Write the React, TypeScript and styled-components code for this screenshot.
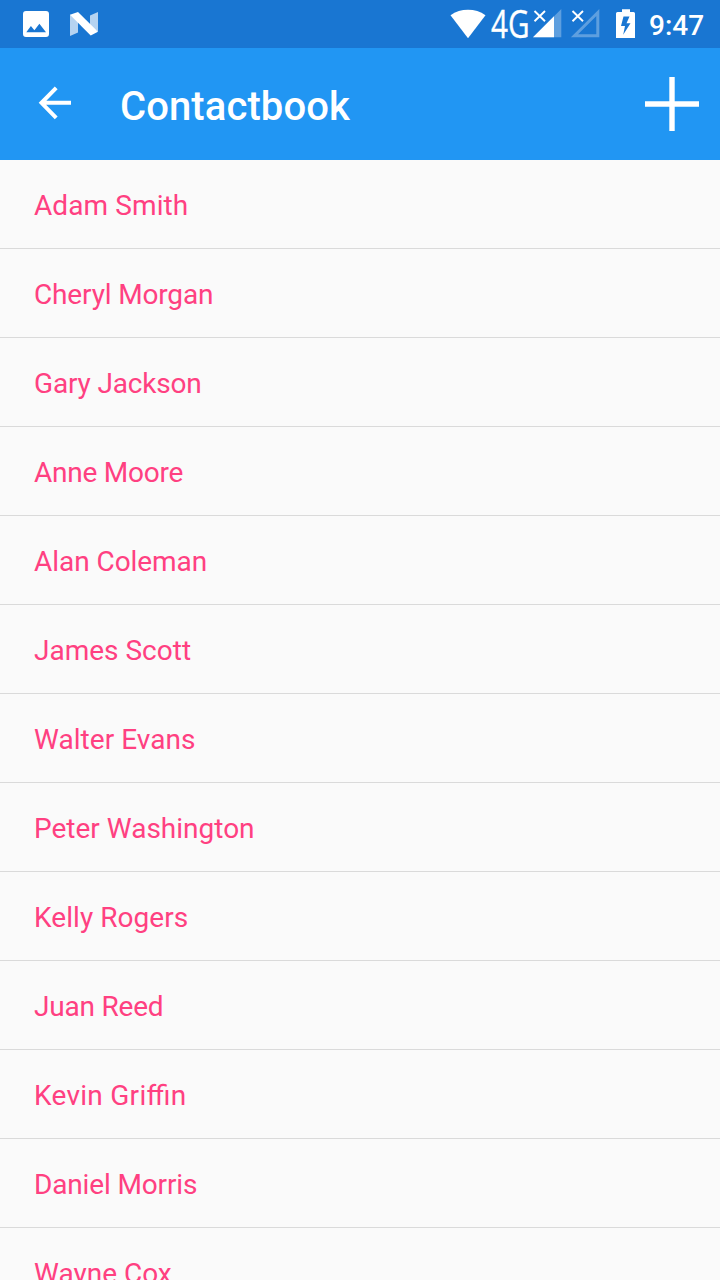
import React from "react";
import styled, { createGlobalStyle } from "styled-components";

const GlobalStyle = createGlobalStyle`
  * { box-sizing: border-box; }
  body {
    margin: 0;
    background: #fafafa;
    font-family: Roboto, "Liberation Sans", sans-serif;
  }
`;

const Screen = styled.div`
  display: flex;
  flex-direction: column;
  width: 720px;
  height: 1280px;
  overflow: hidden;
  background: #fafafa;
`;

const StatusBar = styled.header`
  display: flex;
  flex: none;
  justify-content: space-between;
  height: 48px;
  padding: 0 16px 0 22px;
  background: #1976d2;
`;

const StatusGroup = styled.div`
  display: flex;
  align-items: center;
`;

const StatusIcon = styled.svg<{ $gap?: number }>`
  display: block;
  flex: none;
  margin-right: ${({ $gap = 0 }) => $gap}px;
  overflow: visible;
`;

const Clock = styled.time`
  width: 55px;
  color: #fff;
  font-size: 28px;
  font-weight: 500;
  line-height: 46px;
  padding-top: 4px;
  white-space: nowrap;
`;

const Toolbar = styled.nav`
  display: flex;
  flex: none;
  align-items: center;
  height: 112px;
  padding: 0 20px 0 38px;
  background: #2196f3;
`;

const IconButton = styled.button`
  display: flex;
  flex: none;
  padding: 0;
  border: 0;
  background: none;
`;

const Title = styled.h1`
  flex: 1;
  margin: 0 0 0 48px;
  padding-top: 6px;
  color: #fff;
  font-size: 40px;
  font-weight: 500;
  letter-spacing: 0.1px;
  line-height: 48px;
`;

const ContactList = styled.ul`
  flex: 1;
  min-height: 0;
  margin: 0;
  padding: 0;
  overflow: hidden;
  list-style: none;
`;

const ContactRow = styled.li<{ $tracking: number }>`
  height: 89px;
  padding: 2px 34px 0;
  border-bottom: 1px solid #dadada;
  color: #ff4081;
  font-size: 28px;
  font-feature-settings: "liga" 1;
  letter-spacing: ${({ $tracking }) => $tracking}px;
  line-height: 88px;
`;

const contacts = [
  { name: "Adam Smith", tracking: 0.1 },
  { name: "Cheryl Morgan", tracking: -0.15 },
  { name: "Gary Jackson", tracking: -0.17 },
  { name: "Anne Moore", tracking: -0.23 },
  { name: "Alan Coleman", tracking: -0.05 },
  { name: "James Scott", tracking: 0 },
  { name: "Walter Evans", tracking: 0.04 },
  { name: "Peter Washington", tracking: 0 },
  { name: "Kelly Rogers", tracking: 0.06 },
  { name: "Juan Reed", tracking: -0.2 },
  { name: "Kevin Griffin", tracking: 0.27 },
  { name: "Daniel Morris", tracking: -0.15 },
  { name: "Wayne Cox", tracking: 0 },
];

const Cross = () => (
  <path d="M2.5 11 L13 21.2 M13 11 L2.5 21.2" stroke="#fff" strokeWidth="1.9" fill="none" />
);

export default function App() {
  return (
    <>
      <GlobalStyle />
      <Screen>
        <StatusBar>
          <StatusGroup>
            <StatusIcon width="28" height="48" $gap={20}>
              <path
                fill="#fff"
                fillRule="evenodd"
                d="M4 11H24Q27 11 27 14V34Q27 37 24 37H4Q1 37 1 34V14Q1 11 4 11ZM4.3 32.2H24L17.4 23.8L12.4 30.2L8.9 26Z"
              />
            </StatusIcon>
            <StatusIcon width="28" height="48">
              <path fill="#fff" fillOpacity=".68" d="M0 14.5V36L8 32.5V20ZM20 15.5L28 12V31.5L20 27Z" />
              <path fill="#fff" d="M0 14.7L8 12L28 31.8L20.7 35.5Z" />
            </StatusIcon>
          </StatusGroup>
          <StatusGroup>
            <StatusIcon width="36" height="48" $gap={4}>
              <path fill="#fff" d="M.5 15.3C10.5 8 25.5 8 35.5 15.3L18 38.2Z" />
            </StatusIcon>
            <StatusIcon width="40" height="48" $gap={2}>
              <text
                x="1"
                y="38"
                fill="#fff"
                stroke="#fff"
                strokeWidth="0.4"
                fontFamily='"Open Sans", "Noto Sans", sans-serif'
                fontSize="37.5"
                textLength="38.5"
                lengthAdjust="spacingAndGlyphs"
              >
                4G
              </text>
            </StatusIcon>
            <StatusIcon width="30" height="48" $gap={8}>
              <path fill="#fff" fillOpacity=".3" d="M29.3 9V37.3H1Z" />
              <path fill="#fff" d="M22 16.3V37.3H1Z" />
              <path d="M2.5 11 L13 21.2 M13 11 L2.5 21.2" stroke="#1976d2" strokeWidth="5" />
              <Cross />
            </StatusIcon>
            <StatusIcon width="30" height="48" $gap={16}>
              <path fill="none" stroke="#fff" strokeOpacity=".3" strokeWidth="3" d="M27.8 12.5V35.8H4.5Z" />
              <path d="M2.5 11 L13 21.2 M13 11 L2.5 21.2" stroke="#1976d2" strokeWidth="5" />
              <Cross />
            </StatusIcon>
            <StatusIcon width="20" height="48" $gap={13}>
              <path
                fill="#fff"
                fillRule="evenodd"
                d="M6 9.2H14V12H17.5Q19 12 19 13.5V38H0V13.5Q0 12 1.5 12H6ZM7.5 16.5L5 26H9L7.2 34.7L14.5 23.2H10.5L13.5 16.5Z"
              />
            </StatusIcon>
            <Clock>9:47</Clock>
          </StatusGroup>
        </StatusBar>
        <Toolbar>
          <IconButton aria-label="Back">
            <svg width="34" height="112">
              <path
                d="M18.2 39.8L3.5 54.8L18.2 69.8M4 54.8H33"
                fill="none"
                stroke="#fff"
                strokeWidth="4"
              />
            </svg>
          </IconButton>
          <Title>Contactbook</Title>
          <IconButton aria-label="Add contact">
            <svg width="56" height="112">
              <path d="M28 29V83M1 56H55" stroke="#fff" strokeWidth="5.4" />
            </svg>
          </IconButton>
        </Toolbar>
        <ContactList>
          {contacts.map(({ name, tracking }) => (
            <ContactRow key={name} $tracking={tracking}>
              {name}
            </ContactRow>
          ))}
        </ContactList>
      </Screen>
    </>
  );
}
